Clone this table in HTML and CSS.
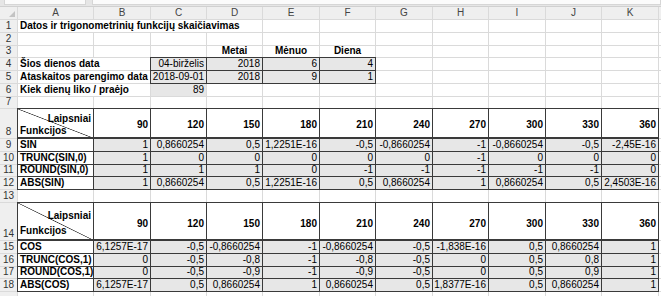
FILE: index.html
```html
<!DOCTYPE html>
<html lang="lt">
<head>
<meta charset="utf-8">
<title>Datos ir trigonometrinių funkcijų skaičiavimas</title>
<link rel="stylesheet" href="styles.css">
</head>
<body>
<div class="strip"><div class="strip-box"></div><div class="strip-box wide"></div></div>
<div class="sheet">
  <div class="h corner"><span class="tri"></span></div>
  <div class="h">A</div><div class="h">B</div><div class="h">C</div><div class="h">D</div><div class="h">E</div><div class="h">F</div><div class="h">G</div><div class="h">H</div><div class="h">I</div><div class="h">J</div><div class="h">K</div><div class="h"></div>

  <div class="r">1</div>
  <div class="c b sp4 nowrap">Datos ir trigonometrinių funkcijų skaičiavimas</div>
  <div class="c"></div><div class="c"></div><div class="c"></div><div class="c"></div><div class="c"></div><div class="c"></div><div class="c"></div><div class="c"></div>

  <div class="r">2</div>
  <div class="c"></div><div class="c"></div><div class="c"></div><div class="c"></div><div class="c"></div><div class="c"></div><div class="c"></div><div class="c"></div><div class="c"></div><div class="c"></div><div class="c"></div><div class="c"></div>

  <div class="r">3</div>
  <div class="c"></div><div class="c"></div><div class="c"></div>
  <div class="c b m">Metai</div><div class="c b m">Mėnuo</div><div class="c b m">Diena</div>
  <div class="c"></div><div class="c"></div><div class="c"></div><div class="c"></div><div class="c"></div><div class="c"></div>

  <div class="r">4</div>
  <div class="c b sp2 nowrap">Šios dienos data</div>
  <div class="c g k n">04-birželis</div><div class="c g k n">2018</div><div class="c g k n">6</div><div class="c g k n">4</div>
  <div class="c"></div><div class="c"></div><div class="c"></div><div class="c"></div><div class="c"></div><div class="c"></div>

  <div class="r">5</div>
  <div class="c b sp2 nowrap">Ataskaitos parengimo data</div>
  <div class="c g k n">2018-09-01</div><div class="c g k n">2018</div><div class="c g k n">9</div><div class="c g k n">1</div>
  <div class="c"></div><div class="c"></div><div class="c"></div><div class="c"></div><div class="c"></div><div class="c"></div>

  <div class="r">6</div>
  <div class="c b sp2 nowrap">Kiek dienų liko / praėjo</div>
  <div class="c g n">89</div>
  <div class="c"></div><div class="c"></div><div class="c"></div><div class="c"></div><div class="c"></div><div class="c"></div><div class="c"></div><div class="c"></div><div class="c"></div>

  <div class="r">7</div>
  <div class="c"></div><div class="c"></div><div class="c"></div><div class="c"></div><div class="c"></div><div class="c"></div><div class="c"></div><div class="c"></div><div class="c"></div><div class="c"></div><div class="c"></div><div class="c"></div>

  <div class="r low">8</div>
  <div class="c k diag d1"><span class="dl">Laipsniai</span><span class="df">Funkcijos</span></div>
  <div class="c k b n hd">90</div><div class="c k b n hd">120</div><div class="c k b n hd">150</div><div class="c k b n hd">180</div><div class="c k b n hd">210</div><div class="c k b n hd">240</div><div class="c k b n hd">270</div><div class="c k b n hd">300</div><div class="c k b n hd">330</div><div class="c k b n hd">360</div>
  <div class="c"></div>

  <div class="r">9</div>
  <div class="c k b t2">SIN</div>
  <div class="c g k n t2">1</div><div class="c g k n t2">0,8660254</div><div class="c g k n t2">0,5</div><div class="c g k n t2">1,2251E-16</div><div class="c g k n t2">-0,5</div><div class="c g k n t2">-0,8660254</div><div class="c g k n t2">-1</div><div class="c g k n t2">-0,8660254</div><div class="c g k n t2">-0,5</div><div class="c g k n t2">-2,45E-16</div>
  <div class="c"></div>

  <div class="r">10</div>
  <div class="c k b">TRUNC(SIN,0)</div>
  <div class="c g k n">1</div><div class="c g k n">0</div><div class="c g k n">0</div><div class="c g k n">0</div><div class="c g k n">0</div><div class="c g k n">0</div><div class="c g k n">-1</div><div class="c g k n">0</div><div class="c g k n">0</div><div class="c g k n">0</div>
  <div class="c"></div>

  <div class="r">11</div>
  <div class="c k b">ROUND(SIN,0)</div>
  <div class="c g k n">1</div><div class="c g k n">1</div><div class="c g k n">1</div><div class="c g k n">0</div><div class="c g k n">-1</div><div class="c g k n">-1</div><div class="c g k n">-1</div><div class="c g k n">-1</div><div class="c g k n">-1</div><div class="c g k n">0</div>
  <div class="c"></div>

  <div class="r">12</div>
  <div class="c k b">ABS(SIN)</div>
  <div class="c g k n">1</div><div class="c g k n">0,8660254</div><div class="c g k n">0,5</div><div class="c g k n">1,2251E-16</div><div class="c g k n">0,5</div><div class="c g k n">0,8660254</div><div class="c g k n">1</div><div class="c g k n">0,8660254</div><div class="c g k n">0,5</div><div class="c g k n">2,4503E-16</div>
  <div class="c"></div>

  <div class="r">13</div>
  <div class="c"></div><div class="c"></div><div class="c"></div><div class="c"></div><div class="c"></div><div class="c"></div><div class="c"></div><div class="c"></div><div class="c"></div><div class="c"></div><div class="c"></div><div class="c"></div>

  <div class="r low">14</div>
  <div class="c k diag d2"><span class="dl">Laipsniai</span><span class="df">Funkcijos</span></div>
  <div class="c k b n hd2">90</div><div class="c k b n hd2">120</div><div class="c k b n hd2">150</div><div class="c k b n hd2">180</div><div class="c k b n hd2">210</div><div class="c k b n hd2">240</div><div class="c k b n hd2">270</div><div class="c k b n hd2">300</div><div class="c k b n hd2">330</div><div class="c k b n hd2">360</div>
  <div class="c"></div>

  <div class="r">15</div>
  <div class="c k b t2">COS</div>
  <div class="c g k n t2">6,1257E-17</div><div class="c g k n t2">-0,5</div><div class="c g k n t2">-0,8660254</div><div class="c g k n t2">-1</div><div class="c g k n t2">-0,8660254</div><div class="c g k n t2">-0,5</div><div class="c g k n t2">-1,838E-16</div><div class="c g k n t2">0,5</div><div class="c g k n t2">0,8660254</div><div class="c g k n t2">1</div>
  <div class="c"></div>

  <div class="r">16</div>
  <div class="c k b">TRUNC(COS,1)</div>
  <div class="c g k n">0</div><div class="c g k n">-0,5</div><div class="c g k n">-0,8</div><div class="c g k n">-1</div><div class="c g k n">-0,8</div><div class="c g k n">-0,5</div><div class="c g k n">0</div><div class="c g k n">0,5</div><div class="c g k n">0,8</div><div class="c g k n">1</div>
  <div class="c"></div>

  <div class="r">17</div>
  <div class="c k b">ROUND(COS,1)</div>
  <div class="c g k n">0</div><div class="c g k n">-0,5</div><div class="c g k n">-0,9</div><div class="c g k n">-1</div><div class="c g k n">-0,9</div><div class="c g k n">-0,5</div><div class="c g k n">0</div><div class="c g k n">0,5</div><div class="c g k n">0,9</div><div class="c g k n">1</div>
  <div class="c"></div>

  <div class="r">18</div>
  <div class="c k b">ABS(COS)</div>
  <div class="c g k n">6,1257E-17</div><div class="c g k n">0,5</div><div class="c g k n">0,8660254</div><div class="c g k n">1</div><div class="c g k n">0,8660254</div><div class="c g k n">0,5</div><div class="c g k n">1,8377E-16</div><div class="c g k n">0,5</div><div class="c g k n">0,8660254</div><div class="c g k n">1</div>
  <div class="c"></div>

  <div class="r"></div>
  <div class="c"></div><div class="c"></div><div class="c"></div><div class="c"></div><div class="c"></div><div class="c"></div><div class="c"></div><div class="c"></div><div class="c"></div><div class="c"></div><div class="c"></div><div class="c"></div>
</div>
</body>
</html>
```
FILE: styles.css
```css
html, body {
  margin: 0;
  padding: 0;
  width: 661px;
  height: 296px;
  overflow: hidden;
  background: #ffffff;
}

body {
  font-family: "Liberation Sans", Arial, sans-serif;
  font-size: 10px;
  color: #000;
}

.strip {
  height: 7px;
  background: #e6e6e6;
  display: flex;
  gap: 6px;
  padding: 0 0 0 4px;
  box-sizing: border-box;
  border-bottom: 1px solid #d0d0d0;
}

.strip-box {
  width: 80px;
  height: 4px;
  background: #fbfbfb;
  border: 1px solid #d6d6d6;
  border-top: none;
}

.strip-box.wide {
  flex: 1;
}

.sheet {
  display: grid;
  grid-template-columns: 17px 75px 56px 55px 55px 56px 55px 56px 55px 56px 55px 56px 2px;
  grid-template-rows: 12px repeat(7, 11.75px) 28.75px repeat(5, 11.75px) 37.25px repeat(4, 11.75px) 10px;
  gap: 1px;
  background: #dadada;
}

.h {
  background: #efefef;
  color: #444;
  display: flex;
  align-items: center;
  justify-content: center;
  line-height: 1;
}

.corner {
  position: relative;
}

.tri {
  position: absolute;
  right: 2px;
  bottom: 2px;
  width: 0;
  height: 0;
  border-left: 6px solid transparent;
  border-bottom: 6px solid #c3c3c3;
}

.r {
  background: #efefef;
  color: #333;
  display: flex;
  align-items: center;
  justify-content: center;
  line-height: 1;
}

.r.low {
  align-items: flex-end;
  padding-bottom: 1px;
}

.c {
  background: #ffffff;
  display: flex;
  align-items: center;
  padding: 0 2px;
  line-height: 1;
  white-space: nowrap;
  min-width: 0;
}

.b { font-weight: bold; }

.n { justify-content: flex-end; }

.m { justify-content: center; }

.g { background: #e7e7e7; }

.k { box-shadow: 0 0 0 1px #3a3a3a; }

.t2 { box-shadow: 0 0 0 1px #3a3a3a, 0 -1px 0 1px #3a3a3a; }

.sp2 { grid-column: span 2; }
.sp4 { grid-column: span 4; }

.nowrap { overflow: visible; }

.hd { padding-top: 2px; }
.hd2 { padding-top: 5px; }

.diag {
  background: linear-gradient(to top right, #ffffff calc(50% - 0.7px), #3a3a3a 50%, #ffffff calc(50% + 0.7px));
  flex-direction: column;
  align-items: stretch;
  justify-content: center;
  font-weight: bold;
}

.d1 { gap: 2px; padding-top: 2px; }
.d2 { gap: 5px; padding-top: 4px; }

.dl { text-align: right; }
.df { text-align: left; }
```
